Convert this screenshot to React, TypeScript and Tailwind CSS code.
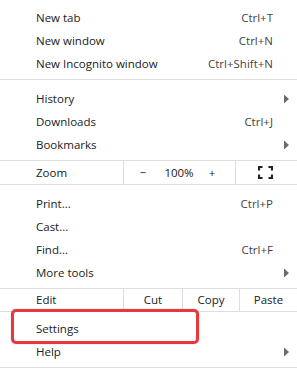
import React from 'react';

type Item = { label: string; shortcut?: string; submenu?: boolean };

const Arrow = () => (
  <svg width="5" height="9" viewBox="0 0 5 9" className="absolute right-[8px] top-1/2 -translate-y-1/2">
    <path d="M0 0 L5 4.5 L0 9 Z" fill="#6b6b6b" />
  </svg>
);

const Row = ({ item }: { item: Item }) => (
  <div className="relative flex h-[23px] items-center pl-[36px] pr-[24px]">
    <span className="flex-1">{item.label}</span>
    {item.shortcut && <span className="text-[#444]">{item.shortcut}</span>}
    {item.submenu && <Arrow />}
  </div>
);

const Section = ({ items, top = 'pt-[7px]' }: { items: Item[]; top?: string }) => (
  <div className={`${top} pb-[4px] border-b border-[#dedede]`}>
    {items.map(i => (
      <Row key={i.label} item={i} />
    ))}
  </div>
);

const FullscreenIcon = () => (
  <svg width="15" height="13" viewBox="0 0 15 13">
    <g fill="none" stroke="#202124" strokeWidth="2.2">
      <path d="M1 4.5 V1 H4.5" />
      <path d="M10.5 1 H14 V4.5" />
      <path d="M1 8.5 V12 H4.5" />
      <path d="M10.5 12 H14 V8.5" />
    </g>
  </svg>
);

const App: React.FC = () => {
  return (
    <div
      className="relative w-[297px] h-[369px] overflow-hidden bg-white text-[11.5px] text-[#202124]"
      style={{ fontFamily: '"Open Sans", "Noto Sans", sans-serif' }}
    >
      <Section
        top="pt-[6px]"
        items={[
          { label: 'New tab', shortcut: 'Ctrl+T' },
          { label: 'New window', shortcut: 'Ctrl+N' },
          { label: 'New Incognito window', shortcut: 'Ctrl+Shift+N' },
        ]}
      />
      <Section
        items={[
          { label: 'History', submenu: true },
          { label: 'Downloads', shortcut: 'Ctrl+J' },
          { label: 'Bookmarks', submenu: true },
        ]}
      />
      <div className="flex h-[24px] border-b border-[#dedede]">
        <div className="flex w-[123px] items-center pl-[36px]">Zoom</div>
        <div className="flex w-[112px] items-center border-l border-[#dedede]">
          <span className="w-[38px] text-center">−</span>
          <span className="w-[34px] text-center">100%</span>
          <span className="w-[32px] text-center">+</span>
        </div>
        <div className="flex flex-1 items-center justify-center border-l border-[#dedede] pr-[2px]">
          <FullscreenIcon />
        </div>
      </div>
      <Section
        items={[
          { label: 'Print...', shortcut: 'Ctrl+P' },
          { label: 'Cast...' },
          { label: 'Find...', shortcut: 'Ctrl+F' },
          { label: 'More tools', submenu: true },
        ]}
      />
      <div className="flex h-[23px] border-b border-[#dedede]">
        <div className="flex w-[123px] items-center pl-[36px]">Edit</div>
        <div className="flex w-[59px] items-center justify-center border-l border-[#dedede]">Cut</div>
        <div className="flex w-[57px] items-center justify-center border-l border-[#dedede]">Copy</div>
        <div className="flex flex-1 items-center justify-center border-l border-[#dedede]">Paste</div>
      </div>
      <Section
        top="pt-[5px]"
        items={[{ label: 'Settings' }, { label: 'Help', submenu: true }]}
      />
      <div className="absolute left-[11px] top-[309px] h-[35px] w-[188px] rounded-[5px] border-[3.5px] border-[#e8383d] shadow-[0_0_1px_rgba(0,0,0,0.5)]" />
    </div>
  );
};

export default App;
